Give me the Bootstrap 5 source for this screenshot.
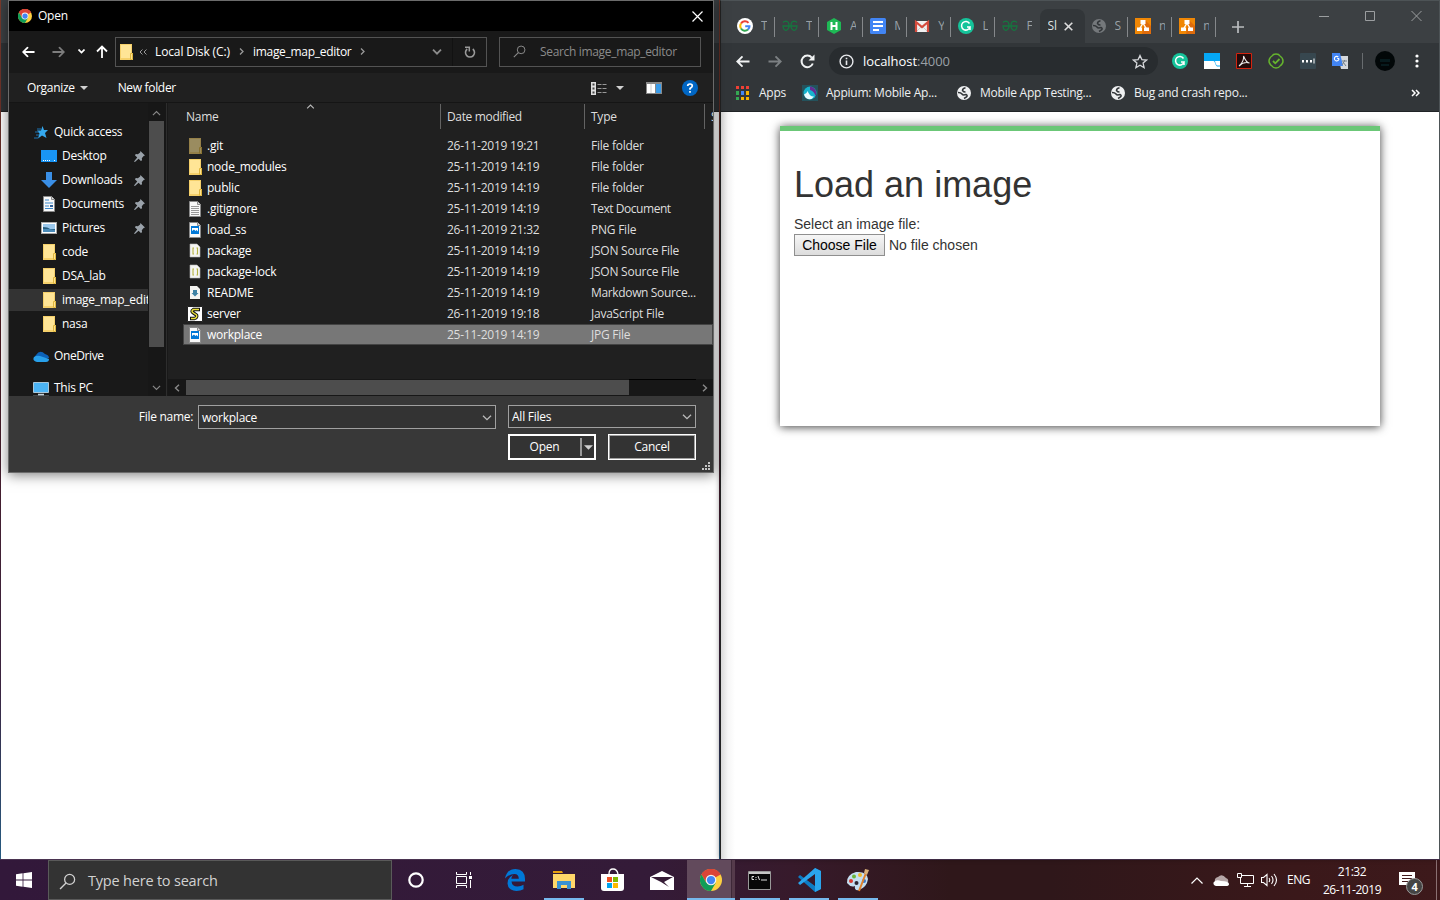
<!DOCTYPE html>
<html lang="en">
<head>
<meta charset="utf-8">
<title>Desktop</title>
<link href="https://cdn.jsdelivr.net/npm/bootstrap@5.3.0/dist/css/bootstrap.min.css" rel="stylesheet">
<style>
body{width:1440px;height:900px;overflow:hidden;background:#3a2028;font:12px/16px "Open Sans","Noto Sans",sans-serif;color:#fff;letter-spacing:-.24px}
svg{display:block;flex:none}
.abs-win{position:absolute}
.desk{height:859px;background:linear-gradient(#7a3b2c,#4a1a22 40%,#3a2440 80%,#265a80)}
.winL{left:1px;top:0;width:718px;height:859px;background:#fff}
.winL .headbar{height:43px;background:#3c4043}
.winL .headbar2{height:69px;background:#2e3235;border-bottom:1px solid #222}
.winR{left:720px;top:0;width:720px;height:859px;background:#fff;border:1px solid #4d5356;border-bottom:0;border-left-color:#222;box-shadow:-1px 0 5px rgba(0,0,0,.35)}
.winR::before{content:"";position:absolute;left:0;top:111px;width:14px;bottom:0;background:linear-gradient(90deg,#d9d9d9,#f6f6f6 50%,#fff)}
/* file dialog */
.dlg{left:8px;top:0;width:706px;height:473px;background:#191919;border:1px solid #6b6b6b;box-shadow:0 2px 12px rgba(0,0,0,.5)}
.dlg .ttl{height:30px;background:#000;padding-left:9px;padding-right:10px}
.navrow{height:42px;background:#191919;padding-bottom:1px}
.addr{width:372px;height:30px;border:1px solid #535353;margin-left:7px}
.srch{width:202px;height:30px;border:1px solid #535353;margin-left:12px;color:#8b8b8b}
.tools{height:30px;background:#202020;border-bottom:1px solid #151515}
.mid{height:293px}
.navp{width:139px;overflow:hidden;padding-top:17px;background:#191919}
.ni{height:24px;white-space:nowrap;padding-left:32px}
.ni>svg{margin-right:5px}
.ni.lv0{padding-left:24px}
.ni .pin{margin:0 3px 0 auto}
.ni.cur{background:linear-gradient(#191919 1px,#333 1px,#333 23px,#191919 23px)}
.vsb{width:19px;border-right:1px solid #2d2d2d;background:#171717}
.vsb .thumb{width:15px;height:226px;background:#4d4d4d;margin-left:1px}
.files{flex:1;background:#202020;overflow:hidden;border-left:1px solid #191919}
.fh{height:26px;color:#dedede}
.fh>div{flex:none;border-right:1px solid #636363;height:25px;padding:5px 0 0 6px;margin-top:1px}
.fr{height:21px;margin-left:15px;padding-left:4px;white-space:nowrap;color:#dedede}
.fr .nm{width:260px;padding-left:20px;color:#fff;position:relative}
.fr .nm svg{position:absolute;left:1px;top:0}
.fr .dt{width:144px}
.fr.sel{background:#777;border:1px solid #444;padding-left:3px}
.hsb{height:17px;background:#171717;margin-top:34px}
.hsb .thumb{width:443px;height:15px;background:#4d4d4d}
.foot{background:#383838;height:76px}
.inp{border:1px solid #a0a0a0;background:#333;padding-left:3px;padding-right:3px}
.wbtn{height:26px;width:88px;border:2px solid #fff;background:#333}
.wbtn.canc{border:1px solid #fff;box-shadow:inset 0 0 0 1px #a0a0a0}
/* browser */
.tabs{height:42px;background:#3c4043;padding:8px 0 0 9px;color:#9aa0a6}
.tb{flex:none;width:44.1px;height:34px;padding-left:7px;position:relative}
.tb.t1{width:45px}
.tb::after{content:"";position:absolute;right:0;top:8px;width:1px;height:20px;background:#85888b}
.tb.act::after,.tb.nol::after{display:none}
.tb span{width:6px;margin-left:8px;overflow:hidden;white-space:nowrap}
.tb.act{background:#323639;border-radius:8px 8px 0 0;width:45px;color:#dfe1e5;padding-left:8px}
.tb.aft{width:43.5px}
.bar{height:36px;background:#323639}
.omni{width:329px;height:28px;border-radius:14px;background:#282c2f;margin-left:14px;padding:0 10px;font-size:13px;letter-spacing:-.05px}
.bm{height:33px;background:#323639;border-bottom:1px solid #202326;color:#eef0f1;white-space:nowrap}
.loadcard{position:relative;width:600px;height:300px;margin:14px 0 0 59px;border-top:5px solid #6bc777;background:#fff;color:#333;padding:31px 14px;box-shadow:0 1px 9px rgba(0,0,0,.75);font:14px/20px "Liberation Sans",Arial,sans-serif;letter-spacing:0}
.loadcard h1{font:36px/40px "Liberation Sans",Arial,sans-serif;margin:3px 0 9px}
.pick{width:91px;height:22px;border:1px solid #8f8f8f;background:linear-gradient(#f6f6f6,#dcdcdc);color:#000;border-radius:0;font:14px/18px "Liberation Sans",Arial,sans-serif;padding:0}
/* taskbar */
.task{height:41px;border-top:1px solid #4a3350;background:linear-gradient(90deg,#32183a,#341b38 45%,#371a2b 55%,#2f171a 66%,#2f171a 73%,#3a181a 90%,#3d191b)}
.tsearch{width:344px;height:40px;background:#333;border:1px solid #5a5a5a;color:#d2d2d2;font-size:14.5px;letter-spacing:-.2px;padding-top:2px}
.ti{width:49px;height:40px;position:relative;display:flex;align-items:center;justify-content:center}
.ti.run::after{content:"";position:absolute;bottom:0;left:5px;width:40px;height:2px;background:#76b9ed}
.ti.on{width:48px;background:linear-gradient(90deg,#624a5c 44px,#3e2838 44px,#3e2838 45px,#553b4b 45px)}
.ti.on::after{left:0;width:48px}
.tray{color:#fff;white-space:nowrap}
.cnt{left:1406px;top:878px;width:17px;height:17px;border-radius:50%;background:#444;border:1px solid #999;font-weight:700;font-size:11px;line-height:15px;text-align:center}
</style>
</head>
<body>
<svg width="0" height="0" class="position-absolute">
<symbol id="fold" viewBox="0 0 16 16"><path d="M1 0h12v9h1v7H1z" fill="#f5d06a"/><path d="M2 1h10v13H2z" fill="#ffe596"/><path d="M11.500 9.500h2v6h-2z" fill="#ffe391" stroke="#dfb63e"/></symbol>
<symbol id="chrome" viewBox="0 0 24 24"><circle cx="12" cy="12" r="12" fill="#fdd041"/><path d="M12 12L1.600 6A12 12 0 0 1 22.400 6z" fill="#db4437"/><path d="M12 6h10.400A12 12 0 0 0 1.600 6l5.200 9z" fill="#db4437"/><path d="M1.600 6A12 12 0 0 0 12 24l5.200-9L12 12 6.800 15z" fill="#0f9d58"/><circle cx="12" cy="12" r="5.800" fill="#f4f4f4"/><circle cx="12" cy="12" r="4.500" fill="#4285f4"/></symbol>
<symbol id="pin" viewBox="0 0 12 12"><path d="M7 0l5 5-1.500.5-2 2.500.3 2L7.500 11 5 8.500 1 12 0 11.500 3.500 7 1 4.500 2 3.300l2.200.2 2.500-2z" fill="#9aa2aa"/></symbol>
<symbol id="doc" viewBox="0 0 14 16"><path d="M1.500.5h8l3 3v12h-11z" fill="#f8f8f8" stroke="#8a8a8a"/><path d="M9.500.5v3h3" fill="#ddd" stroke="#8a8a8a"/></symbol>
<symbol id="img" viewBox="0 0 14 16"><path d="M1.500.5h8l3 3v12h-11z" fill="#f8f8f8" stroke="#8a8a8a"/><path d="M9.500.5v3h3" fill="#ddd" stroke="#8a8a8a"/><path d="M3 4h8v8H3z" fill="#0078d7"/><path d="M4 6h6v3.500L8.500 8 7.500 9 6 7.500 4 9z" fill="#fff"/></symbol>
<symbol id="json" viewBox="0 0 14 16"><path d="M2 1h7l3 3v10H2z" fill="#f5f5f2" stroke="#bbb" stroke-width=".6"/><path d="M6 5H5v6h1M8.500 5h1v6h-1" fill="none" stroke="#b6b344" stroke-width="1.100"/></symbol>
<symbol id="mag" viewBox="0 0 16 16"><circle cx="10" cy="6" r="4.700" fill="none" stroke="currentColor" stroke-width="1.200"/><path d="M6.600 9.500L1 15" stroke="currentColor" stroke-width="1.300"/></symbol>
<symbol id="globe" viewBox="0 0 14 14"><circle cx="7" cy="7" r="7" fill="currentColor"/><path d="M8.500 1.800Q5.500 2.500 5.500 4.500 6.500 6 8.500 6M1 6.500q3 0 4 1.500t4 .5q2 1 .5 2.500L7 12.500" fill="none" stroke="#323639" stroke-width="1.500"/></symbol>
<symbol id="gfg" viewBox="0 0 16 12"><path d="M1 2.500Q2 1.200 4 1.200q3 .3 3 4.300T4 10.300Q1.300 10 1 6h14q-.3 4-3 4.300Q9 9.500 9 5.500t3-4.300q2 0 3 1.300" fill="none" stroke="#16753f" stroke-width="1.300"/></symbol>
<symbol id="gram" viewBox="0 0 16 16"><circle cx="8" cy="8" r="8" fill="#15c39a"/><path d="M11.500 5.500A4.300 4.300 0 1 0 12 9H9M12 9v3" fill="none" stroke="#fff" stroke-width="1.500"/></symbol>
<symbol id="draw" viewBox="0 0 16 16"><path d="M0 0h16v16H0z" fill="#f08705"/><path d="M10 2l6 6v8H7z" fill="#df6c0c"/><path d="M8 5l-3.500 6M8 5l3.500 6" stroke="#fff" stroke-width="1.400"/><path d="M5.500 2h5v4h-5zM2 9.500h5V13H2zM9 9.500h5V13H9z" fill="#fff"/></symbol>
<symbol id="dn" viewBox="0 0 10 6"><path d="M1 .7l4 4 4-4" fill="none" stroke="currentColor" stroke-width="1.300"/></symbol>
<symbol id="tri" viewBox="0 0 8 4"><path d="M0 0h8L4 4z" fill="#d0d0d0"/></symbol>
<symbol id="arr" viewBox="0 0 14 12"><path d="M13.500 6H1.500M6.500.8L1.300 6l5.200 5.200" fill="none" stroke="currentColor" stroke-width="1.900"/></symbol>
</svg>

<main class="desk position-relative">
 <section class="winL abs-win"><div class="headbar"></div><div class="headbar2"></div></section>

 <section class="winR abs-win">
  <div class="tabs d-flex">
   <div class="tb t1 d-flex align-items-center"><svg width="16" height="16" viewBox="0 0 16 16"><circle cx="8" cy="8" r="8" fill="#fff"/><g fill="none" stroke-width="2"><path d="M4 5.500A4.600 4.600 0 0 1 11.500 4.800" stroke="#ea4335"/><path d="M4 5.500a4.600 4.600 0 0 0 0 5" stroke="#fbbc05"/><path d="M4 10.500a4.600 4.600 0 0 0 7 1" stroke="#34a853"/><path d="M11 11.500Q12.600 10 12.500 8.200H8.200" stroke="#4285f4"/></g></svg><span>T</span></div>
   <div class="tb d-flex align-items-center"><svg width="16" height="12"><use href="#gfg"/></svg><span>T</span></div>
   <div class="tb d-flex align-items-center"><svg width="16" height="16" viewBox="0 0 16 16"><path d="M8 0l7 4v8l-7 4-7-4V4z" fill="#1eb955"/><path d="M5.500 4v8M10.500 4v8M5 8h6" stroke="#fff" stroke-width="2"/></svg><span>A</span></div>
   <div class="tb d-flex align-items-center"><svg width="16" height="16" viewBox="0 0 16 16"><rect width="16" height="16" rx="1.500" fill="#4285f4"/><path d="M3 4h10M3 8h10M3 12h6" stroke="#fff" stroke-width="2"/></svg><span>M</span></div>
   <div class="tb d-flex align-items-center"><svg width="16" height="16" viewBox="0 0 16 16"><path d="M1 3h14v11H1z" fill="#f1f1f1"/><path d="M3 13l5-5 5 5" fill="none" stroke="#ccc"/><path d="M2 14V4l6 5 6-5v10" fill="none" stroke="#d54b3d" stroke-width="2.200"/></svg><span>Y</span></div>
   <div class="tb d-flex align-items-center"><svg width="16" height="16"><use href="#gram"/></svg><span>L</span></div>
   <div class="tb nol d-flex align-items-center"><svg width="16" height="12"><use href="#gfg"/></svg><span>F</span></div>
   <div class="tb act d-flex align-items-center"><span class="m-0" style="width:9px">Sl</span><svg width="9" height="9" viewBox="0 0 9 9" style="margin-left:7px"><path d="M.7.7l7.600 7.600M8.300.7L.7 8.300" stroke="#dcdcdc" stroke-width="1.600"/></svg></div>
   <div class="tb aft d-flex align-items-center"><svg width="14" height="14" color="#74787b"><use href="#globe"/></svg><span style="margin-left:9px">S</span></div>
   <div class="tb d-flex align-items-center"><svg width="16" height="16"><use href="#draw"/></svg><span>n</span></div>
   <div class="tb d-flex align-items-center"><svg width="16" height="16"><use href="#draw"/></svg><span>n</span></div>
   <svg width="12" height="12" viewBox="0 0 12 12" style="margin:12px 0 0 15.500px"><path d="M6 0v12M0 6h12" stroke="#b9bcbf" stroke-width="1.700"/></svg>
   <svg width="103" height="12" viewBox="0 0 103 12" style="margin:1px 0 0 75px"><path d="M0 6.500h10M46.500 1.500h9v9h-9zM92.500 1l10 10M102.500 1l-10 10" fill="none" stroke="#9b9ea0"/></svg>
  </div>
  <div class="bar d-flex align-items-center" style="padding-left:15px">
   <svg width="14" height="13" viewBox="0 0 14 12" color="#f1f3f4"><use href="#arr"/></svg>
   <svg width="14" height="13" viewBox="0 0 14 12" color="#7c8083" style="margin-left:18px;transform:scaleX(-1)"><use href="#arr"/></svg>
   <svg width="15" height="15" viewBox="0 0 15 15" style="margin-left:18px"><path d="M12.800 9.500A5.800 5.800 0 1 1 11.800 3.600" fill="none" stroke="#f1f3f4" stroke-width="2"/><path d="M14.500.5v6h-6z" fill="#f1f3f4"/></svg>
   <div class="omni d-flex align-items-center"><svg width="15" height="15" viewBox="0 0 15 15"><circle cx="7.500" cy="7.500" r="6.400" fill="none" stroke="#e8eaed" stroke-width="1.400"/><path d="M7.500 6.500v4.500M7.500 3.700v1.600" stroke="#e8eaed" stroke-width="1.600"/></svg><span style="margin-left:9px">localhost<span style="color:#9aa0a6">:4000</span></span>
    <svg class="ms-auto" width="16" height="15" viewBox="0 0 16 15"><path d="M8 1.500l1.900 4.100 4.600.5-3.400 3 1 4.500L8 11.300l-4.100 2.300 1-4.500-3.400-3 4.600-.5z" fill="none" stroke="#d5d7da" stroke-width="1.300"/></svg></div>
   <div class="d-flex align-items-center" style="gap:16px;margin-left:14px">
    <svg width="16" height="16"><use href="#gram"/></svg>
    <svg width="16" height="16" viewBox="0 0 16 16"><path d="M0 0h16v16H0z" fill="#05a7f5"/><path d="M0 8h9.500q1 0 1.500 2t2 3.500h3V16H0z" fill="#fff"/><path d="M11 8h5v4.500h-3q-1.500-1-2-4.500z" fill="#fff"/></svg>
    <svg width="16" height="16" viewBox="0 0 16 16"><path d="M.5.500h15v15H.5z" fill="#230b0b" stroke="#d3230f"/><path d="M3 13c4-3 5-8 4.500-10C10 9 12 10 13.500 10 10 9 6 10 3 13z" fill="none" stroke="#eee" stroke-width="1.100"/></svg>
    <svg width="16" height="16" viewBox="0 0 16 16"><path d="M8 1q3 0 4 2 3 2 3 5t-3 5q-1 2-4 2t-4-2Q1 11 1 8t3-5q1-2 4-2z" fill="none" stroke="#65b32e" stroke-width="1.500"/><path d="M5 8l2.300 2.300L11.500 6" fill="none" stroke="#65b32e" stroke-width="1.800"/></svg>
    <svg width="16" height="16" viewBox="0 0 16 16"><rect width="16" height="16" rx="1" fill="#37474f"/><path d="M2 7h2v2.500H2zM6 7h2v2.500H6zM10 7h2v2.500h-2zM13.500 5.500h1v5h-1z" fill="#fff"/></svg>
    <svg width="16" height="16" viewBox="0 0 16 16"><path d="M6 3h10v13H9z" fill="#d5d8dc"/><path d="M0 0h8l3 13H0z" fill="#4285f4"/><path d="M7 5.500H5.200M7 5.500A2.300 2.300 0 1 1 6.300 4" fill="none" stroke="#fff" stroke-width="1.100"/><path d="M10 8h5M12.500 7v1l-2.500 4M11 9l3 4" stroke="#75808a" fill="none"/></svg>
   </div>
   <div style="width:1px;height:16px;background:#686c6f;margin-left:14px"></div>
   <svg width="20" height="20" viewBox="0 0 20 20" style="margin-left:12px"><circle cx="10" cy="10" r="10" fill="#020708"/><path d="M5 8h10v3H5zM6 13h8v2H6z" fill="#071a1d"/></svg>
   <svg width="4" height="14" viewBox="0 0 4 14" fill="#fff" style="margin-left:20px"><circle cx="2" cy="2" r="1.600"/><circle cx="2" cy="7" r="1.600"/><circle cx="2" cy="12" r="1.600"/></svg>
  </div>
  <div class="bm d-flex align-items-center" style="padding:0 19px 5px 15px">
   <svg width="13" height="14" viewBox="0 0 13 14"><path d="M0 0h3v3H0zM5 0h3v3H5zM10 0h3v3h-3z" fill="#f04035"/><path d="M0 5h3v4H0zM0 11h3v3H0z" fill="#35a853"/><path d="M5 5h3v4H5z" fill="#4285f4"/><path d="M10 5h3v4h-3zM5 11h3v3H5zM10 11h3v3h-3z" fill="#f6b400"/></svg>
   <span style="margin-left:10px;width:43px">Apps</span>
   <svg width="16" height="16" viewBox="0 0 16 16"><path d="M0 0h16v16H0z" fill="#24525c"/><circle cx="8" cy="8" r="6.500" fill="#17b4cf"/><path d="M8 1.500a6.500 6.500 0 0 1 5.500 9.500Q12 6 8 5z" fill="#662d91"/><path d="M2 9.500q3-1 3.500-3.500Q8 12 12 11.500 10 14.500 7 14.300 3 13.500 2 9.500z" fill="#e9fbff"/></svg>
   <span style="margin-left:8px;width:131px">Appium: Mobile Ap...</span>
   <svg width="14" height="14" color="#eef0f1"><use href="#globe"/></svg>
   <span style="margin-left:9px;width:131px">Mobile App Testing...</span>
   <svg width="14" height="14" color="#eef0f1"><use href="#globe"/></svg>
   <span style="margin-left:9px">Bug and crash repo...</span>
   <svg class="ms-auto" width="9" height="8" viewBox="0 0 9 8"><path d="M1 1l3 3-3 3M5 1l3 3-3 3" fill="none" stroke="#fff" stroke-width="1.500"/></svg>
  </div>
  <div class="loadcard"><h1>Load an image</h1><div>Select an image file:</div><div class="d-flex align-items-center"><button class="pick">Choose File</button><span style="margin-left:4px">No file chosen</span></div></div>
 </section>

 <section class="dlg abs-win">
  <div class="ttl d-flex align-items-center"><svg width="14" height="14"><use href="#chrome"/></svg><span style="margin-left:6px">Open</span><svg class="ms-auto" width="11" height="11" viewBox="0 0 11 11"><path d="M.5.500l10 10M10.500.500l-10 10" stroke="#fff" stroke-width="1.200"/></svg></div>
  <div class="navrow d-flex align-items-center" style="padding-left:13px">
   <svg width="13" height="12" viewBox="0 0 14 12"><use href="#arr"/></svg>
   <svg width="13" height="12" viewBox="0 0 14 12" color="#7d7d7d" style="margin-left:17px;transform:scaleX(-1)"><use href="#arr"/></svg>
   <svg width="7" height="5" viewBox="0 0 7 5" style="margin-left:13px"><path d="M.5.5l3 3 3-3" fill="none" stroke="#fff" stroke-width="1.700"/></svg>
   <svg width="12" height="13" viewBox="0 0 12 13" style="margin-left:11px"><path d="M6 13V1.500M1 6.500l5-5 5 5" fill="none" stroke="#fff" stroke-width="1.800"/></svg>
   <div class="addr d-flex align-items-center"><svg width="16" height="16" style="margin-left:3px"><use href="#fold"/></svg>
    <svg width="8" height="6" viewBox="0 0 8 6" style="margin-left:4px"><path d="M3.500.5L1 3l2.500 2.500M7.500.5L5 3l2.500 2.500" fill="none" stroke="#999"/></svg>
    <span style="margin-left:8px;width:84px;letter-spacing:-.12px">Local Disk (C:)</span><svg width="5" height="7" viewBox="0 0 5 7"><path d="M1 .5l3 3-3 3" fill="none" stroke="#999" stroke-width="1.300"/></svg>
    <span style="margin-left:9px;width:107px;letter-spacing:-.3px">image_map_editor</span><svg width="5" height="7" viewBox="0 0 5 7"><path d="M1 .5l3 3-3 3" fill="none" stroke="#999" stroke-width="1.300"/></svg>
    <svg class="ms-auto" width="10" height="6" viewBox="0 0 10 6" style="margin-right:10px"><path d="M1 .7l4 4 4-4" fill="none" stroke="#8c8c8c" stroke-width="1.800"/></svg>
    <div class="h-100 d-flex align-items-center justify-content-center" style="width:34px;border-left:1px solid #121212"><svg width="12" height="12" viewBox="0 0 12 12"><path d="M8.800 3A4.500 4.500 0 1 1 3.200 3" fill="none" stroke="#999" stroke-width="1.600"/><path d="M1 1.200h4.300v4.300" fill="none" stroke="#999" stroke-width="1.500"/></svg></div>
   </div>
   <div class="srch d-flex align-items-center"><svg width="13" height="13" viewBox="0 0 16 16" style="margin:0 14px 0 13px"><use href="#mag"/></svg><span style="letter-spacing:-.33px">Search image_map_editor</span></div>
  </div>
  <div class="tools d-flex align-items-center" style="padding-left:18px;padding-top:1px"><span style="letter-spacing:-.32px">Organize</span><svg width="8" height="4" style="margin-left:5px"><use href="#tri"/></svg><span style="margin-left:30px;letter-spacing:-.32px">New folder</span>
   <svg class="ms-auto" width="16" height="13" viewBox="0 0 16 13"><path d="M0 0h5v13H0z" fill="#ddd"/><path d="M1.500 1.500h2v2h-2zM1.500 5.500h2v2h-2zM1.500 9.500h2v2h-2z" fill="#444"/><path d="M6.500 2.500h9M6.500 6.500h9M6.500 10.500h9" stroke="#999" stroke-dasharray="4 1"/></svg>
   <svg width="8" height="4" style="margin-left:9px"><use href="#tri"/></svg>
   <svg width="16" height="12" viewBox="0 0 16 12" style="margin-left:22px"><path d="M0 0h16v12H0z" fill="#888"/><path d="M1 2h8v9H1z" fill="#fff"/><path d="M5 2v9" stroke="#ccc"/><path d="M10 2h5v9h-5z" fill="#3a9be8"/></svg>
   <svg width="16" height="16" viewBox="0 0 16 16" style="margin:0 15px 0 20px"><circle cx="8" cy="8" r="8" fill="#0066c4"/><path d="M5.700 6Q5.700 4 8 4t2.300 2Q10.300 7 8 8.500v1.300M8 11v1.700" fill="none" stroke="#fff" stroke-width="1.700"/></svg>
  </div>
  <div class="mid d-flex">
   <nav class="navp">
    <div class="ni lv0 d-flex align-items-center"><svg width="16" height="13" viewBox="0 0 16 13"><path d="M9.500 0L11 4h4l-3 3 1.500 5L9 9.500 5 12.500 6.500 7.500 4 4.500h4z" fill="#35a9ef"/><path d="M4 3h4M2 6h4M3 9h3M1 12h4" stroke="#1d74b5"/></svg>Quick access</div>
    <div class="ni d-flex align-items-center"><svg width="16" height="12" viewBox="0 0 16 12"><path d="M0 0h16v12H0z" fill="#1995f5"/><path d="M2 10.500h8M13 10.500h2" stroke="#fff" stroke-dasharray="1 1"/></svg>Desktop<svg class="pin" width="11" height="11"><use href="#pin"/></svg></div>
    <div class="ni d-flex align-items-center"><svg width="16" height="16" viewBox="0 0 16 16"><path d="M5 0h6v8h5l-8 8-8-8h5z" fill="#3a8fe6"/></svg>Downloads<svg class="pin" width="11" height="11"><use href="#pin"/></svg></div>
    <div class="ni d-flex align-items-center"><svg width="16" height="16" viewBox="-1 0 16 16"><use href="#doc" width="14" height="16"/><path d="M3 4h4M3 7h8M3 10h4M3 12.500h8" stroke="#3b86c8" stroke-width="1.200"/><path d="M8 9h3v2H8z" fill="#2e5f99"/></svg>Documents<svg class="pin" width="11" height="11"><use href="#pin"/></svg></div>
    <div class="ni d-flex align-items-center"><svg width="16" height="12" viewBox="0 0 16 12"><path d="M0 0h16v12H0z" fill="#aaa"/><path d="M1 1h14v10H1z" fill="#fff"/><path d="M2 2h12v8H2z" fill="#9cc9ed"/><path d="M2 5q5 0 7 2h5v3H2z" fill="#285f7f"/><path d="M2 7h6l6 1v2H2z" fill="#4c8cb9"/></svg>Pictures<svg class="pin" width="11" height="11"><use href="#pin"/></svg></div>
    <div class="ni d-flex align-items-center"><svg width="16" height="16"><use href="#fold" x="1" width="16" height="16"/></svg>code</div>
    <div class="ni d-flex align-items-center"><svg width="16" height="16"><use href="#fold" x="1" width="16" height="16"/></svg>DSA_lab</div>
    <div class="ni cur d-flex align-items-center"><svg width="16" height="16"><use href="#fold" x="1" width="16" height="16"/></svg>image_map_editor</div>
    <div class="ni d-flex align-items-center"><svg width="16" height="16"><use href="#fold" x="1" width="16" height="16"/></svg>nasa</div>
    <div class="ni lv0 mt-2 d-flex align-items-center"><svg width="16" height="11" viewBox="0 0 16 11"><path d="M3 10a4 4 0 0 1 0-6q4-6 9-1 4 1 4 4z" fill="#0c62b8"/><path d="M4 11q-5-1-3-5 3-2 6-1l9 3q0 3-3 3z" fill="#28a0ea"/></svg><span style="letter-spacing:-.4px">OneDrive</span></div>
    <div class="ni lv0 mt-2 d-flex align-items-center"><svg width="16" height="15" viewBox="0 0 16 15" style="margin-top:3px"><path d="M.5.500h15v10H.5z" fill="#4bb4f5" stroke="#a9c7da"/><path d="M5 12.500h6M0 14.500h16" stroke="#c3d2dc" stroke-width="1.300"/></svg>This PC</div>
   </nav>
   <div class="vsb d-flex flex-column align-items-start"><svg width="9" height="6" style="margin:7px 4px 5px;transform:scaleY(-1)" color="#888"><use href="#dn"/></svg><div class="thumb"></div><svg width="9" height="6" style="margin:auto 4px 5px" color="#888"><use href="#dn"/></svg></div>
   <div class="files position-relative">
    <svg class="position-absolute" width="9" height="5" style="left:138px;top:1px;transform:scaleY(-1)" color="#bbb"><use href="#dn"/></svg>
    <div class="fh d-flex"><div style="width:273px;padding-left:18px">Name</div><div style="width:144px;letter-spacing:-.35px">Date modified</div><div style="width:120px">Type</div><div class="border-0">S</div></div>
    <div style="height:6px"></div>
    <div class="fr d-flex align-items-center"><div class="nm"><svg width="16" height="16" opacity=".55"><use href="#fold"/></svg>.git</div><div class="dt">26-11-2019 19:21</div><div>File folder</div></div>
    <div class="fr d-flex align-items-center"><div class="nm"><svg width="16" height="16"><use href="#fold"/></svg>node_modules</div><div class="dt">25-11-2019 14:19</div><div>File folder</div></div>
    <div class="fr d-flex align-items-center"><div class="nm"><svg width="16" height="16"><use href="#fold"/></svg>public</div><div class="dt">25-11-2019 14:19</div><div>File folder</div></div>
    <div class="fr d-flex align-items-center"><div class="nm"><svg width="14" height="16" viewBox="0 0 14 16"><use href="#doc"/><path d="M3 5.500h8M3 7.500h8M3 9.500h8M3 11.500h8M3 13.500h8" stroke="#999"/></svg>.gitignore</div><div class="dt">25-11-2019 14:19</div><div style="letter-spacing:-.45px">Text Document</div></div>
    <div class="fr d-flex align-items-center"><div class="nm"><svg width="14" height="16"><use href="#img"/></svg>load_ss</div><div class="dt">26-11-2019 21:32</div><div>PNG File</div></div>
    <div class="fr d-flex align-items-center"><div class="nm"><svg width="14" height="16"><use href="#json"/></svg>package</div><div class="dt">25-11-2019 14:19</div><div>JSON Source File</div></div>
    <div class="fr d-flex align-items-center"><div class="nm"><svg width="14" height="16"><use href="#json"/></svg>package-lock</div><div class="dt">25-11-2019 14:19</div><div>JSON Source File</div></div>
    <div class="fr d-flex align-items-center"><div class="nm"><svg width="14" height="16" viewBox="0 0 14 16"><path d="M2 1h7l3 3v10H2z" fill="#f5f5f2"/><path d="M5 5h4v3h1.500L7 11.500 3.500 8H5z" fill="#3f83a5"/></svg>README</div><div class="dt">25-11-2019 14:19</div><div style="letter-spacing:-.35px">Markdown Source...</div></div>
    <div class="fr d-flex align-items-center"><div class="nm"><svg width="16" height="16" viewBox="0 0 16 16" style="left:0"><path d="M.5.500h15v15H.5z" fill="#fff" stroke="#222"/><path d="M13 3.500H6.500q-3 1.500 0 3.500l3 2q1 2.500-2 3.500H3" fill="none" stroke="#111" stroke-width="3.400"/><path d="M12 3.500H6.500q-3 1.500 0 3.500l3 2q1 2.500-2 3.500H4" fill="none" stroke="#e9df3a" stroke-width="1.500"/></svg>server</div><div class="dt">26-11-2019 19:18</div><div>JavaScript File</div></div>
    <div class="fr sel d-flex align-items-center"><div class="nm"><svg width="14" height="16"><use href="#img"/></svg>workplace</div><div class="dt">25-11-2019 14:19</div><div>JPG File</div></div>
    <div class="hsb d-flex align-items-center"><svg width="6" height="8" viewBox="0 0 6 8" style="margin:0 6px"><path d="M5 .7L1.500 4 5 7.300" fill="none" stroke="#8a8a8a" stroke-width="1.400"/></svg><div class="thumb"></div><div style="width:67px;height:17px;border-top:1px solid #000"></div><svg width="6" height="8" viewBox="0 0 6 8" style="margin-left:6px"><path d="M1 .7L4.500 4 1 7.300" fill="none" stroke="#8a8a8a" stroke-width="1.400"/></svg></div>
   </div>
  </div>
  <div class="foot position-relative">
   <div class="d-flex" style="padding-top:9px"><span class="text-end" style="width:184px;padding-top:4px;margin-right:5px;letter-spacing:-.3px">File name:</span><div class="inp d-flex align-items-center" style="width:298px;height:24px;padding-top:1px">workplace<svg class="ms-auto" width="10" height="6" color="#bbb"><use href="#dn"/></svg></div><div class="inp d-flex align-items-center" style="width:188px;height:23px;margin-left:12px">All Files<svg class="ms-auto" width="10" height="6" color="#bbb"><use href="#dn"/></svg></div></div>
   <div class="d-flex" style="padding:5px 0 0 499px;gap:12px"><div class="wbtn d-flex align-items-center"><span class="text-center" style="width:69px">Open</span><div style="width:2px;height:18px;background:#999;margin-left:1px;margin-right:2px"></div><svg width="9" height="5"><use href="#tri"/></svg></div><div class="wbtn canc d-flex align-items-center justify-content-center">Cancel</div></div>
   <svg class="position-absolute" style="right:3px;bottom:2px" width="8" height="8" viewBox="0 0 8 8" fill="#c5c5c5"><path d="M6 0h2v2H6zM3 3h2v2H3zM6 3h2v2H6zM0 6h2v2H0zM3 6h2v2H3zM6 6h2v2H6z"/></svg>
  </div>
 </section>
</main>

<footer class="task d-flex">
 <div class="ti" style="width:48px"><svg width="16" height="16" viewBox="0 0 16 16"><path d="M0 2.300l6.600-1v6.300H0zM7.400 1.200L16 0v7.600H7.400zM0 8.400h6.600v6.300L0 13.700zM7.400 8.400H16V16l-8.600-1.200z" fill="#fff"/></svg></div>
 <div class="tsearch d-flex align-items-center"><svg width="17" height="17" viewBox="0 0 16 16" style="margin:0 12px 0 10px"><use href="#mag"/></svg>Type here to search</div>
 <div class="ti" style="width:48px"><svg width="16" height="16" viewBox="0 0 16 16"><circle cx="8" cy="8" r="6.700" fill="none" stroke="#fff" stroke-width="2.200"/></svg></div>
 <div class="ti" style="width:48px"><svg width="16" height="16" viewBox="0 0 16 16"><path d="M.5 0v2.500h10V0M.5 16v-2.500h10V16M.5 4.500h10v7H.5zM14.500 0v3M14.500 8v8" fill="none" stroke="#fff"/><path d="M13 4h3v3h-3z" fill="#fff"/></svg></div>
 <div class="ti" style="width:54px"><svg width="20" height="22" viewBox="0 0 20 22"><path d="M0 9.500Q2 0 10.500 0 20 .5 20 10v2.500H6.500q.5 5 6 5 3.500 0 6-1.700v4.500Q15.500 22 11.500 22 3 21.500 2.500 14.500q0-6 5.500-8.500-1.500 1.500-1.700 3.700h7.500Q13.700 5 9.500 5 4 5 0 9.500z" fill="#0078d7"/></svg></div>
 <div class="ti run" style="width:49px;margin-left:-3px"><svg width="22" height="18" viewBox="0 0 22 18"><path d="M0 0h9l1 2H0z" fill="#e8a10f"/><path d="M0 3h22v14H0z" fill="#ffd769"/><path d="M4 18V10h14v8h-4v-4H8v4z" fill="#3992d3"/></svg></div>
 <div class="ti"><svg width="24" height="24" viewBox="0 0 24 24"><path d="M0 6h23v14q0 3-3 3H3q-3 0-3-3z" fill="#fff"/><path d="M8 6q0-5 4-5t5 5" fill="none" stroke="#fff" stroke-width="1.300"/><path d="M6 9h5v5H6z" fill="#f25022"/><path d="M12 9h5v5h-5z" fill="#7fba00"/><path d="M6 15h5v5H6z" fill="#00a4ef"/><path d="M12 15h5v5h-5z" fill="#ffb900"/></svg></div>
 <div class="ti"><svg width="24" height="19" viewBox="0 0 24 19"><path d="M0 6l12-6 12 6v13H0z" fill="#fff"/><path d="M1 6h22l-9 5 5 5-8-5z" fill="#351b35"/></svg></div>
 <div class="ti run on" style="margin-left:1px"><svg width="22" height="22"><use href="#chrome"/></svg></div>
 <div class="ti run"><svg width="23" height="19" viewBox="0 0 23 19"><path d="M.5.500h22v18H.5z" fill="#080808" stroke="#999"/><path d="M1 1h21v2H1z" fill="#c5c5c5"/><path d="M6 5.500H4v3h2M8 6v1M8 8v1M10 5l1.500 4M13 9h6" stroke="#ddd" fill="none"/></svg></div>
 <div class="ti run"><svg width="24" height="24" viewBox="0 0 24 24"><path d="M18 0l6 3v18l-6 3L1 9l2-2 15 11z" fill="#0d7cc4"/><path d="M18 0l6 3v18l-6 3V6L3 17l-2-2z" fill="#2aa5ec"/></svg></div>
 <div class="ti run"><svg width="24" height="24" viewBox="0 0 24 24"><path d="M1 15Q0 7 10 4q11-1 12 7-1 8-9 11-5 1-4-4-4 2-8-3z" fill="#c4def0"/><circle cx="10.500" cy="15" r="2" fill="#2b2530"/><circle cx="5" cy="13" r="2" fill="#d8392e"/><circle cx="8" cy="8.500" r="2" fill="#6ab53a"/><circle cx="14" cy="7" r="2" fill="#f0b82c"/><circle cx="18" cy="13" r="2" fill="#3a78c8"/><path d="M20 5l-7 18" stroke="#e0812c" stroke-width="2"/><path d="M18 5l1-4 4 1-2 5z" fill="#d9b079"/></svg></div>
 <div class="tray ms-auto d-flex align-items-center">
  <svg width="12" height="7" viewBox="0 0 12 7"><path d="M.5 6.500l5.500-5.500 5.500 5.500" fill="none" stroke="#fff" stroke-width="1.200"/></svg>
  <svg width="16" height="11" viewBox="0 0 16 11" style="margin-left:10px"><path d="M2 7q-1-4 3-5 4-4 8 1 3 1 2 4z" fill="#b5a6a7"/><path d="M3 11Q0 10 .5 7.500 3 4 8 6q8 0 8 3 0 2-3 2z" fill="#fff"/></svg>
  <svg width="17" height="15" viewBox="0 0 17 15" style="margin-left:8px"><path d="M5 2.500h11.500v8H3.500V5M7 13.500h7M10.500 10.500v3M.5.500h4v4h-4z" fill="none" stroke="#fff"/></svg>
  <svg width="17" height="14" viewBox="0 0 17 14" style="margin-left:7px"><path d="M.5 4.500h2L6 1.500v11L2.500 9.500h-2zM8 5q1.500 2 0 4M10.500 3q3 4 0 8M13 1q5 6 0 12" fill="none" stroke="#fff" stroke-width="1.100"/></svg>
  <span style="margin-left:9px;width:24px;letter-spacing:-.5px">ENG</span>
  <div class="text-center" style="width:60px;margin-left:11px;line-height:18px;letter-spacing:-.45px;padding-top:1px">21:32<br>26-11-2019</div>
  <svg width="17" height="17" viewBox="0 0 17 17" style="margin:0 20px 0 17px"><path d="M0 0h16v13h-4v4l-4-4H0z" fill="#fff"/><path d="M3 3.500h10M3 6.500h10M3 9.500h6" stroke="#421a1c"/></svg>
  <div style="width:1px;height:40px;background:#8a7072;margin-right:3px"></div>
 </div>
</footer>
<div class="cnt abs-win">4</div>
<script src="https://cdn.jsdelivr.net/npm/bootstrap@5.3.0/dist/js/bootstrap.bundle.min.js"></script>
</body>
</html>
